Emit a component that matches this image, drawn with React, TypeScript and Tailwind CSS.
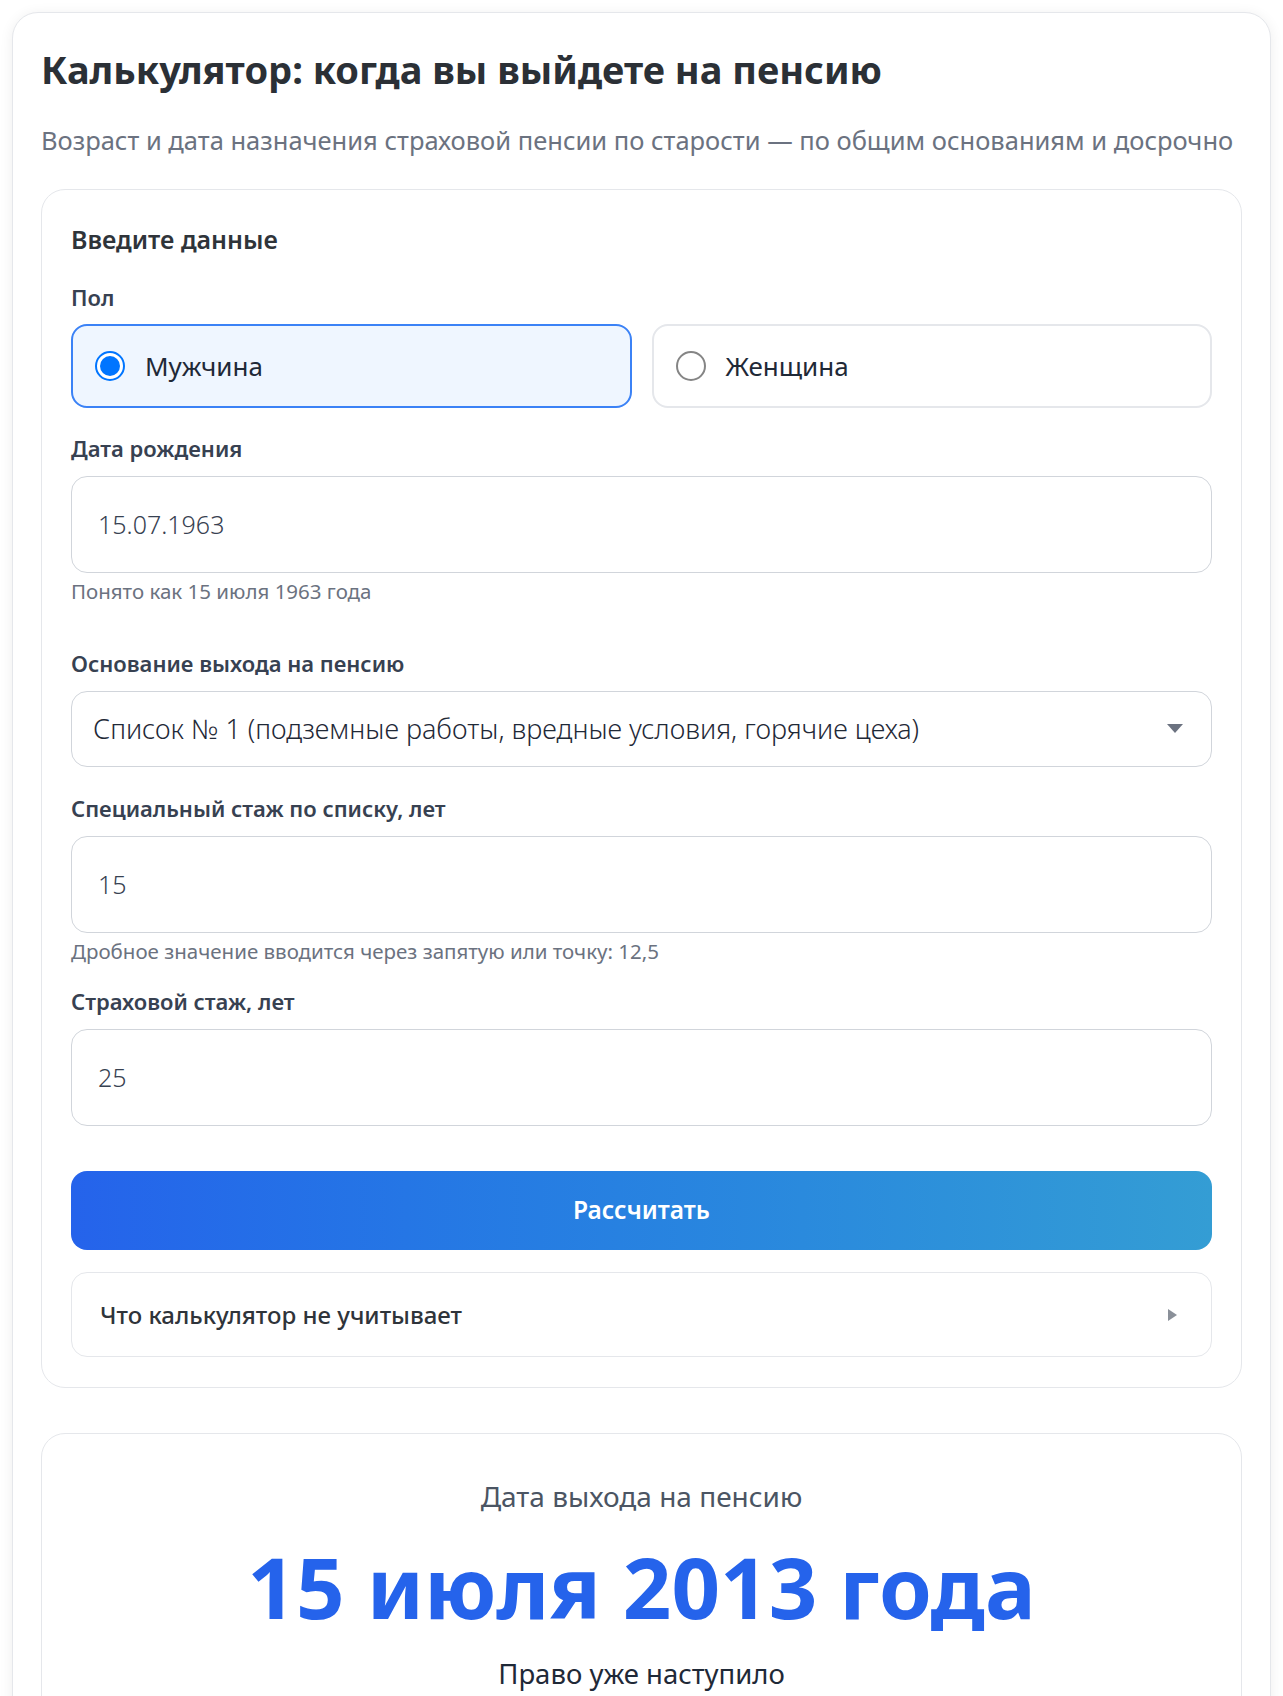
import React from "react";

const Label = ({ children, className = "" }: { children: React.ReactNode; className?: string }) => (
  <div className={`text-[22px] font-semibold leading-[30px] text-[#374151] ${className}`}>{children}</div>
);

const Input = ({ value }: { value: string }) => (
  <div className="flex h-[97px] items-center rounded-[16px] border border-[#d1d5db] bg-white px-[26px] text-[25px] font-light text-[#374151]">
    {value}
  </div>
);

const Hint = ({ children }: { children: React.ReactNode }) => (
  <div className="mt-[4px] text-[20.5px] leading-[28px] text-[#6b7280]">{children}</div>
);

export default function App() {
  return (
    <div className="min-h-screen bg-white p-3 font-['Noto_Sans',sans-serif]">
      <div className="rounded-[26px] border border-[#e5e7eb] bg-white px-[28px] pt-[33px] pb-[60px] shadow-[0_2px_14px_rgba(0,0,0,0.07)]">
        <h1 className="text-[38px] font-bold leading-[46px] text-[#2b3036]">
          Калькулятор: когда вы выйдете на пенсию
        </h1>
        <p className="mt-[31px] text-[25.5px] leading-[34px] text-[#6b7280]">
          Возраст и дата назначения страховой пенсии по старости — по общим основаниям и досрочно
        </p>

        <div className="mt-[32px] rounded-[24px] border border-[#e5e7eb] bg-white px-[29px] pt-[32px] pb-[30px]">
          <div className="text-[25px] font-semibold leading-[34px] text-[#2f343a]">Введите данные</div>

          <Label className="mt-[26px]">Пол</Label>
          <div className="mt-[12px] grid grid-cols-2 gap-[20px]">
            <div className="flex h-[84px] items-center gap-[20px] rounded-[16px] border-[2px] border-[#3b82f6] bg-[#eff6ff] px-[22px]">
              <div className="flex h-[30px] w-[30px] items-center justify-center rounded-full border-[2px] border-[#0075ff] bg-white">
                <div className="h-[20px] w-[20px] rounded-full bg-[#0075ff]" />
              </div>
              <span className="text-[26px] text-[#1f2937]">Мужчина</span>
            </div>
            <div className="flex h-[84px] items-center gap-[20px] rounded-[16px] border-[2px] border-[#e5e7eb] bg-white px-[22px]">
              <div className="h-[30px] w-[30px] rounded-full border-[2px] border-[#858585] bg-white" />
              <span className="text-[26px] text-[#1f2937]">Женщина</span>
            </div>
          </div>

          <Label className="mt-[25px]">Дата рождения</Label>
          <div className="mt-[13px]">
            <Input value="15.07.1963" />
          </div>
          <Hint>Понято как 15 июля 1963 года</Hint>

          <Label className="mt-[43px]">Основание выхода на пенсию</Label>
          <div className="mt-[13px] flex h-[76px] items-center justify-between rounded-[16px] border border-[#d1d5db] bg-white pl-[21px] pr-[28px]">
            <span className="text-[27px] font-light text-[#1f2937]">
              Список № 1 (подземные работы, вредные условия, горячие цеха)
            </span>
            <svg width="16" height="10" viewBox="0 0 16 10" className="shrink-0">
              <path d="M0 0 L16 0 L8 9 Z" fill="#6b7280" />
            </svg>
          </div>

          <Label className="mt-[26px]">Специальный стаж по списку, лет</Label>
          <div className="mt-[13px]">
            <Input value="15" />
          </div>
          <Hint>Дробное значение вводится через запятую или точку: 12,5</Hint>

          <Label className="mt-[21px]">Страховой стаж, лет</Label>
          <div className="mt-[13px]">
            <Input value="25" />
          </div>

          <button className="mt-[45px] flex h-[79px] w-full items-center justify-center rounded-[16px] bg-gradient-to-r from-[#2563eb] to-[#349dd4] text-[24.5px] font-semibold text-white">
            Рассчитать
          </button>

          <div className="mt-[22px] flex h-[85px] items-center justify-between rounded-[16px] border border-[#e5e7eb] bg-white pl-[28px] pr-[34px]">
            <span className="text-[24px] font-medium text-[#2f343a]">Что калькулятор не учитывает</span>
            <svg width="9" height="12" viewBox="0 0 9 12">
              <path d="M0 0 L9 6 L0 12 Z" fill="#8a9099" />
            </svg>
          </div>
        </div>

        <div className="mt-[45px] rounded-[24px] border border-[#e5e7eb] bg-white px-[29px] pt-[43px] pb-[80px] text-center">
          <div className="text-[28px] leading-[38px] text-[#4b5563]">Дата выхода на пенсию</div>
          <div className="mt-[16px] text-[85px] font-bold leading-[110px] text-[#2563eb]">15 июля 2013 года</div>
          <div className="mt-[14px] text-[27.5px] leading-[38px] text-[#1f2937]">Право уже наступило</div>
        </div>
      </div>
    </div>
  );
}
